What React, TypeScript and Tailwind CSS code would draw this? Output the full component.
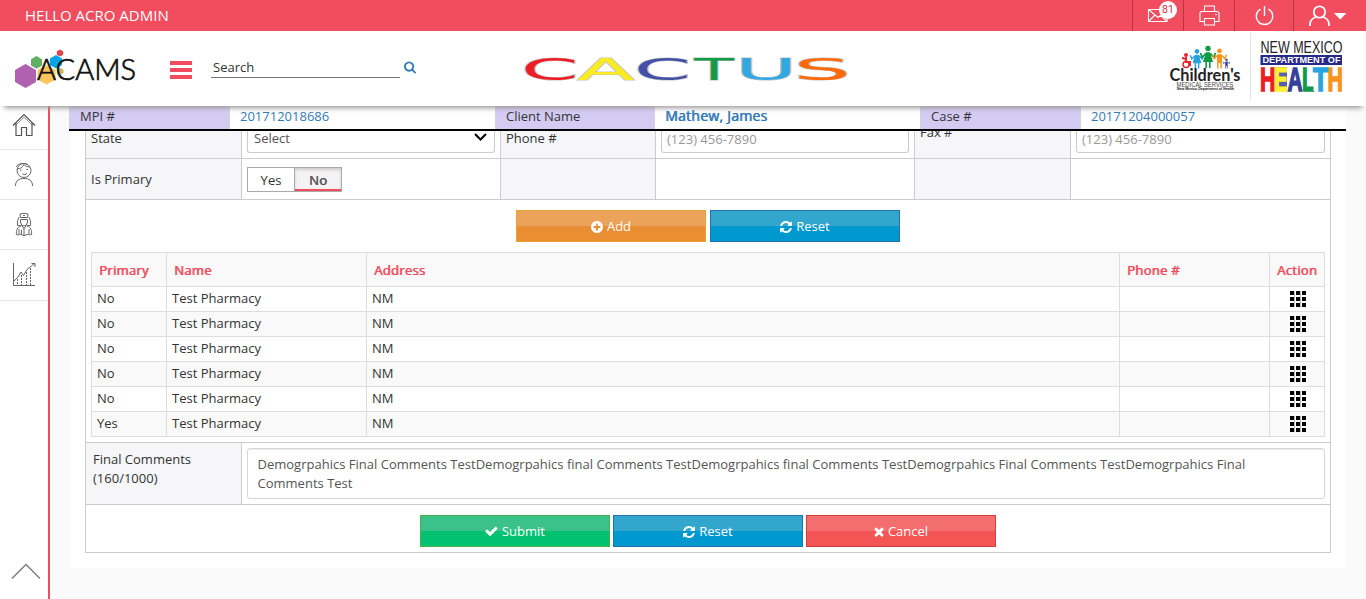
import type { ReactNode } from "react";

const FA = {
  plus: {
    box: "128 128 1536 1536",
    d: "M1344 960v-128q0-26-19-45t-45-19h-256v-256q0-26-19-45t-45-19h-128q-26 0-45 19t-19 45v256h-256q-26 0-45 19t-19 45v128q0 26 19 45t45 19h256v256q0 26 19 45t45 19h128q26 0 45-19t19-45v-256h256q26 0 45-19t19-45zm320-64q0 209-103 385.5t-279.5 279.5-385.5 103-385.5-103-279.5-279.5-103-385.5 103-385.5 279.5-279.5 385.5-103 385.5 103 279.5 279.5 103 385.5z",
  },
  refresh: {
    box: "0 0 1536 1536",
    d: "M1511 928q0 5-1 7-64 268-268 434.5t-478 166.5q-146 0-282.5-55t-243.5-157l-129 129q-19 19-45 19t-45-19-19-45v-448q0-26 19-45t45-19h448q26 0 45 19t19 45-19 45l-137 137q71 66 161 102t187 36q134 0 250-65t186-179q11-17 53-117 8-23 30-23h192q13 0 22.5 9.5t9.5 22.5zm25-800v448q0 26-19 45t-45 19h-448q-26 0-45-19t-19-45 19-45l138-138q-148-137-349-137-134 0-250 65t-186 179q-11 17-53 117-8 23-30 23h-199q-13 0-22.5-9.5t-9.5-22.5v-7q65-268 270-434.5t480-166.5q146 0 284 55.5t245 156.5l130-129q19-19 45-19t45 19 19 45z",
  },
  check: {
    box: "100 240 1600 1536",
    d: "M1671 566q0 40-28 68l-724 724-136 136q-28 28-68 28t-68-28l-136-136-362-362q-28-28-28-68t28-68l136-136q28-28 68-28t68 28l294 295 656-657q28-28 68-28t68 28l136 136q28 28 28 68z",
  },
  times: {
    box: "240 290 1300 1300",
    d: "M1490 1322q0 40-28 68l-136 136q-28 28-68 28t-68-28l-294-294-294 294q-28 28-68 28t-68-28l-136-136q-28-28-28-68t28-68l294-294-294-294q-28-28-28-68t28-68l136-136q28-28 68-28t68 28l294 294 294-294q28-28 68-28t68 28l136 136q28 28 28 68t-28 68l-294 294 294 294q28 28 28 68z",
  },
  search: {
    box: "64 128 1664 1664",
    d: "M1216 832q0-185-131.5-316.5t-316.5-131.5-316.5 131.5-131.5 316.5 131.5 316.5 316.5 131.5 316.5-131.5 131.5-316.5zm512 832q0 52-38 90t-90 38q-54 0-90-38l-343-342q-179 124-399 124-143 0-273.5-55.5t-225-150-150-225-55.5-273.5 55.5-273.5 150-225 225-150 273.5-55.5 273.5 55.5 225 150 150 225 55.5 273.5q0 220-124 399l343 343q37 37 37 90z",
  },
};

function Glyph({ name, className }: { name: keyof typeof FA; className: string }) {
  return (
    <svg viewBox={FA[name].box} className={`shrink-0 fill-current ${className}`}>
      <path d={FA[name].d} />
    </svg>
  );
}

function ActionButton({ tone, icon, iconClass, children }: { tone: string; icon: keyof typeof FA; iconClass: string; children: ReactNode }) {
  return (
    <button className={`flex h-8 w-[190px] items-center justify-center gap-1 border pt-px text-white ${tone}`}>
      <Glyph name={icon} className={iconClass} />
      <span>{children}</span>
    </button>
  );
}

const ORANGE = "border-[#eea236] bg-[linear-gradient(#eba35b_50%,#ea8e33_50%)]";
const BLUE = "border-[#2472ae] bg-[linear-gradient(#33a6cd_50%,#0099cf_50%)]";
const GREEN = "border-[#4cae4c] bg-[linear-gradient(#3bc18a_50%,#02c170_50%)]";
const RED = "border-[#d43f3a] bg-[linear-gradient(#f36f6f_50%,#f35454_50%)]";

function TopBar() {
  return (
    <div className="flex h-[31px] bg-[#f24c5f] text-white">
      <div className="flex-1 pl-[25px] text-[15px] leading-[31px]">HELLO ACRO ADMIN</div>
      <div className="relative w-[51px] border-l border-[#b93342]">
        <svg width="50" height="31" fill="none" stroke="#fff" strokeWidth="1.1">
          <path d="M15.500 9.500h18.500v12h-18.500zM15.500 9.500l9.500 8 9.500-8M15.500 21.500l6.500-6.500M34 21.500l-6.500-6.500" />
        </svg>
        <span className="absolute top-[1px] left-[26px] h-[18px] w-[18px] rounded-full bg-white text-center font-[Roboto,sans-serif] text-[10.5px] leading-[18px] text-[#e02f3f]">81</span>
      </div>
      <div className="w-[51px] border-l border-[#b93342]">
        <svg width="50" height="31" fill="none" stroke="#fff" strokeWidth="1.1">
          <path d="M20.500 11.500v-5.500h10v5.500M20.500 21.500h-4.500v-8q0-2 2-2h15q2 0 2 2v8h-4.500M20.500 18.500h10v6.500h-10zM31 14.500h2" />
        </svg>
      </div>
      <div className="w-[59px] border-l border-[#b93342]">
        <svg width="58" height="31" fill="none" stroke="#fff" strokeWidth="1.4">
          <path d="M29.500 6v10M25.500 9.200a8.200 8.200 0 1 0 8 0" />
        </svg>
      </div>
      <div className="w-[73px] border-l border-[#b93342]">
        <svg width="72" height="31" fill="none" stroke="#fff" strokeWidth="1.800">
          <circle cx="25.500" cy="12" r="5.700" />
          <path d="M16 26v-1.500c0-4.500 3-6.500 5.800-7.500M35 26v-1.500c0-4.500-3-6.500-5.800-7.500" />
          <path d="M40 13h12.500l-6.250 6.500z" fill="#fff" stroke="none" />
        </svg>
      </div>
    </div>
  );
}

function AcamsLogo() {
  return (
    <svg width="124" height="44" viewBox="13 47 124 44" className="ml-[13px] overflow-visible">
      <path d="M25.500 64l10.500 6v12l-10.500 6-10.500-6v-12z" fill="#b061b0" />
      <path d="M36.500 56l5.500 3.200v6.300l-5.500 3.200-5.500-3.200v-6.300z" fill="#5fae63" />
      <path d="M46.500 65l9 5v9.500l-9 5-9-5v-9.500z" fill="#fdc65c" />
      <path d="M56 55l6 3.500v6.500l-6 3.500-6-3.500v-6.500z" fill="#00a5e8" />
      <path d="M60 49.500l3.200 1.700v3.600l-3.200 1.800-3.200-1.800v-3.600z" fill="#d8494b" />
      <path d="M60.500 68l3 1.700v3.200l-3 1.700-3-1.700v-3.200z" fill="#cdb266" />
      <text x="37" y="80" textLength="99" lengthAdjust="spacingAndGlyphs" fontSize="28.500" fontWeight="300" fill="#111" stroke="#111" strokeWidth="0.700" fontFamily="Lato, sans-serif">ACAMS</text>
    </svg>
  );
}

const CACTUS = [
  { ch: "C", x: 525.5, w: 48.5, c: "#ee1c24" },
  { ch: "A", x: 578, w: 56, c: "#fbec21" },
  { ch: "C", x: 638.5, w: 48, c: "#4450a6" },
  { ch: "T", x: 694, w: 40, c: "#119b49" },
  { ch: "U", x: 742.5, w: 47.5, c: "#33a7e0" },
  { ch: "S", x: 799.5, w: 45.500, c: "#ff6a09" },
];
const CACTUS_INK: Record<string, [number, number]> = {
  C: [0.056, 0.588],
  A: [0.008, 0.668],
  T: [-0.003, 0.617],
  U: [0.087, 0.558],
  S: [0.066, 0.503],
};

function CactusLogo() {
  return (
    <svg width="326" height="32" viewBox="522 53 326 32" className="mt-[22px] self-start overflow-visible">
      {CACTUS.map((l, i) => {
        const [lsb, gw] = CACTUS_INK[l.ch];
        const sx = l.w / (gw * 30);
        const transform = `translate(${l.x - lsb * 30 * sx} 80.3) scale(${sx} 1)`;
        return (
          <text
            key={i}
            transform={transform}
            fontSize="30"
            fontFamily="'DejaVu Sans', sans-serif"
            fill={l.c}
            stroke="#c4c4c4"
            strokeWidth="1"
            paintOrder="stroke"
          >
            {l.ch}
          </text>
        );
      })}
    </svg>
  );
}

function Person({ x, y, s, c, dress }: { x: number; y: number; s: number; c: string; dress?: boolean }) {
  return (
    <g transform={`translate(${x} ${y}) scale(${s})`} fill={c} stroke={c}>
      <circle cx="0" cy="-18" r="2" />
      {dress ? <path d="M-1.500-14h3l2.500 8h-8z" /> : <path d="M-2-14h4v8h-4z" />}
      <path d="M-1.700-6v6M1.700-6v6M-2-13.500l-3.500 3.500-1.500-4M2-13.500l3.500 3.500 1.500-4" fill="none" strokeWidth="1.500" />
    </g>
  );
}

function ChildrensLogo() {
  return (
    <svg width="76" height="54" viewBox="1167 42 76 54" className="overflow-visible">
      <circle cx="1186" cy="55" r="2" fill="#e8242e" />
      <path d="M1186 57v5h4v4M1186 59l-4-1" stroke="#e8242e" strokeWidth="2" fill="none" />
      <circle cx="1186" cy="64.500" r="3" stroke="#e8242e" strokeWidth="1.500" fill="none" />
      <Person x={1197} y={68.5} s={0.95} c="#25a0dc" dress />
      <Person x={1208} y={68} s={1.08} c="#0f9a48" dress />
      <Person x={1219.5} y={68.5} s={0.98} c="#f7941e" />
      <Person x={1226.5} y={68.5} s={0.480} c="#2f3b98" />
      <text x="1169.500" y="81" textLength="71" lengthAdjust="spacingAndGlyphs" fontSize="16.500" fontWeight="700" fontFamily="Lato, sans-serif" fill="#222">Children's</text>
      <text x="1176.500" y="87" textLength="57" lengthAdjust="spacingAndGlyphs" fontSize="7" fontFamily="'Liberation Sans', sans-serif" fill="#444">MEDICAL SERVICES</text>
      <text x="1177" y="90.300" textLength="57" lengthAdjust="spacingAndGlyphs" fontSize="4" fontWeight="700" fontFamily="'Liberation Sans', sans-serif" fill="#111">New Mexico Department of Health</text>
    </svg>
  );
}

const HEALTH = [
  { ch: "H", x: 1261.5, bg: "#ffffff", c: "#ee1c25", w: 12.5, lsb: 0.067, ink: 0.586 },
  { ch: "E", x: 1275.5, bg: "#5560a8", c: "#fdf02c", w: 11.500, lsb: 0.067, ink: 0.56 },
  { ch: "A", x: 1287.5, bg: "#ffffff", c: "#35409a", w: 15, lsb: 0, ink: 0.72 },
  { ch: "L", x: 1303.5, bg: "#ffffff", c: "#12994a", w: 10.500, lsb: 0.067, ink: 0.51 },
  { ch: "T", x: 1313.5, bg: "#ffffff", c: "#27a3e0", w: 14, lsb: 0.021, ink: 0.568 },
  { ch: "H", x: 1329, bg: "#ffffff", c: "#f7941e", w: 12.500, lsb: 0.067, ink: 0.586 },
];

function HealthLogo() {
  return (
    <svg width="84" height="54" viewBox="1260 40 84 54" className="overflow-visible">
      <text x="1260.500" y="53" textLength="82" lengthAdjust="spacingAndGlyphs" fontSize="16" fontFamily="'Liberation Sans', sans-serif" fill="#222">NEW MEXICO</text>
      <rect x="1260.500" y="55" width="81.500" height="10" fill="#262a86" />
      <text x="1262.500" y="63.300" textLength="78" lengthAdjust="spacingAndGlyphs" fontSize="9.500" fontWeight="700" fontFamily="'Liberation Sans', sans-serif" fill="#fff">DEPARTMENT OF</text>
      {HEALTH.map((l, i) => {
        const sx = l.w / (l.ink * 33);
        return (
          <g key={i}>
            <rect x={l.x} y="67" width={l.w} height="24" fill={l.bg} />
            <text
              transform={`translate(${l.x - l.lsb * 33 * sx} 90.5) scale(${sx} 1)`}
              fontSize="33"
              fontWeight="700"
              fontFamily="'Liberation Sans', sans-serif"
              fill={l.c}
              stroke={l.c}
              strokeWidth="1.500"
            >
              {l.ch}
            </text>
          </g>
        );
      })}
    </svg>
  );
}

function Header() {
  return (
    <header className="relative z-20 h-[106px] bg-white shadow-[0_6px_5px_-4px_#999]">
      <TopBar />
      <div className="flex h-[75px]">
        <div className="flex w-[522px] items-center">
          <AcamsLogo />
          <div className="ml-[33px] flex w-[22px] flex-col gap-[3px] pt-[2px]">
            <span className="h-1 bg-[#f24c5f]" />
            <span className="h-1 bg-[#f24c5f]" />
            <span className="h-1 bg-[#f24c5f]" />
          </div>
          <div className="mb-[3px] ml-[19px] h-[22px] w-[189px] border-b border-[#777] pl-[2px] text-[13px] leading-[22px] text-[#333]">Search</div>
          <Glyph name="search" className="mb-[2px] ml-1 h-[13px] w-3 text-[#337ab7]" />
        </div>
        <CactusLogo />
        <div className="flex flex-1 justify-end pt-[2px]">
          <div className="pt-[9px]"><ChildrensLogo /></div>
          <div className="ml-[7px] h-[68px] border-l border-[#e4e4e4]" />
          <div className="mr-[22px] ml-[9px] pt-[7px]"><HealthLogo /></div>
        </div>
      </div>
    </header>
  );
}

function Sidebar() {
  return (
    <aside className="flex w-[50px] flex-col border-r-2 border-[#f24c5f] bg-white">
      <div className="h-11 border-b border-[#e7e7e7]">
        <svg width="48" height="43" fill="none" stroke="#555" strokeWidth="1.200">
          <path d="M13 19.500l11-11 11 11M16 17v12.500h5.500v-8h5v8h5.500v-12.500" />
          <path d="M15.500 19.500l8.500-8.500 8.500 8.500" strokeWidth="0.600" />
        </svg>
      </div>
      <div className="h-[50px] border-b border-[#e7e7e7]">
        <svg width="48" height="49" fill="none" stroke="#666" strokeWidth="1">
          <circle cx="24" cy="20.500" r="7" />
          <path d="M15.500 36c0-6 4-7.500 8.500-7.500s8.500 1.500 8.500 7.500M17 19c3 0 6-2 7-4.500 1 1.500 3 2.500 6 2.500M16.500 17c1-3.500 7-4.500 11-2.500M22.500 24q2.500 1.500 4.500-.5M20 20h1.500M26.500 19.500h1.500" />
        </svg>
      </div>
      <div className="h-[50px] border-b border-[#e7e7e7]">
        <svg width="48" height="49" fill="none" stroke="#666" strokeWidth="1">
          <path d="M20.500 17.500l-.5-3.500q4-1.500 8 0l-.5 3.500zM19 17q-2 3-1.500 8.500h4M29 17q2 3 1.500 8.500h-4M20.500 19.500v2.500q.5 4 3.500 4t3.500-4v-2.500zM21 26c-4 1-5 5-4.500 8.500l2.500.5M27 26c4 1 5 5 4.500 8.500l-2.500.5M19 29v5q5 3 10 0v-5M24 28v8M22 26l2 2.500 2-2.500M21.500 30v4M25 15.500h-2" />
        </svg>
      </div>
      <div className="h-[51px] border-b border-[#e7e7e7]">
        <svg width="48" height="50" fill="none" stroke="#666" strokeWidth="1">
          <path d="M13.500 13v22.500H35" />
          <path d="M14 31l4-4 3-5 2.500 3.500 3.500-6 7-5.500M31.500 13.500h3.500v3.500" />
          <path d="M17.500 29v6M21.500 25v10M26.500 22v13M30.500 18v17" strokeDasharray="2 1" />
        </svg>
      </div>
      <svg width="48" height="30" className="mt-auto mb-[14px]" fill="none" stroke="#777" strokeWidth="1.300">
        <path d="M12 23.500l14-14 14 14" />
      </svg>
    </aside>
  );
}

const BOLD = "[text-shadow:0.7px_0_0_currentColor]";

function ClientBar() {
  return (
    <div className="ml-[-1px] grid h-[25px] grid-cols-[160px_266px_159px_266px_160px_266px] border-b-2 border-black bg-white leading-[20px] [&>div]:border-l [&>div]:border-[#d3d3d3] [&>div]:pl-[10px]">
      <div className="bg-[#d4cbf3]">MPI #</div>
      <div className="text-[#337ab7]">201712018686</div>
      <div className="bg-[#d4cbf3]">Client Name</div>
      <div className={`text-[14px] tracking-[0.25px] text-[#337ab7] ${BOLD}`}>Mathew, James</div>
      <div className="bg-[#d4cbf3]">Case #</div>
      <div className="text-[#337ab7]">20171204000057</div>
    </div>
  );
}

const ROWS = ["No", "No", "No", "No", "No", "Yes"];
const FORM_GRID = "grid grid-cols-[156px_259px_155px_259px_156px_260px] border-b border-[#ccc] [&>div]:border-l [&>div]:border-[#ccc] [&>div]:pl-[5px] [&>div]:pr-[5px]";
const TABLE_GRID = "grid grid-cols-[75px_200px_753px_150px_55px] border-b border-[#ddd] [&>div]:border-l [&>div]:border-[#ddd]";

function GridIcon() {
  return (
    <svg width="16" height="16" className="mt-1 ml-5">
      <path d="M4.500 0v16M10.500 0v16" stroke="#bbb" />
      <path d="M0 0h4v4H0zM6 0h4v4H6zM12 0h4v4h-4zM0 6h4v4H0zM6 6h4v4H6zM12 6h4v4h-4zM0 12h4v4H0zM6 12h4v4H6zM12 12h4v4h-4z" />
    </svg>
  );
}

function Pharmacies() {
  return (
    <div className="mx-[5px] border-t border-r border-[#ddd]">
      <div className={`${TABLE_GRID} h-[34px] bg-[#f9f9f9] leading-[35px] tracking-[0.3px] text-[#f24c5f] ${BOLD} [&>div]:pl-[7px]`}>
        <div>Primary</div>
        <div>Name</div>
        <div>Address</div>
        <div>Phone #</div>
        <div>Action</div>
      </div>
      {ROWS.map((primary, i) => (
        <div key={i} className={`${TABLE_GRID} h-[25px] leading-[23px] ${i % 2 ? "bg-[#f9f9f9]" : "bg-white"}`}>
          <div className="pl-[5px]">{primary}</div>
          <div className="pl-[5px]">Test Pharmacy</div>
          <div className="pl-[5px]">NM</div>
          <div />
          <div><GridIcon /></div>
        </div>
      ))}
    </div>
  );
}

function Form() {
  return (
    <div className="mx-[15px] border-r border-[#ccc]">
      <div className={`${FORM_GRID} h-7`}>
        <div className="bg-[#f6f6f9] leading-[15px]">State</div>
        <div>
          <div className="flex h-[22px] justify-between rounded-b-[3px] border border-t-0 border-[#ccc] pr-[7px] pl-[6px] leading-[15px] text-[#555]">
            Select
            <svg width="13" height="12" fill="none" stroke="#000" strokeWidth="2"><path d="M1 3l5.500 5.500 5.500-5.500" /></svg>
          </div>
        </div>
        <div className="bg-[#f6f6f9] leading-[15px]">Phone #</div>
        <div>
          <div className="h-[22px] rounded-b-[3px] border border-t-0 border-[#ccc] pl-[5px] leading-[16px] text-[#999]">(123) 456-7890</div>
        </div>
        <div className="bg-[#f6f6f9]"><div className="-mt-[8px] leading-[19px]">Fax #</div></div>
        <div>
          <div className="h-[22px] rounded-b-[3px] border border-t-0 border-[#ccc] pl-[5px] leading-[16px] text-[#999]">(123) 456-7890</div>
        </div>
      </div>
      <div className={`${FORM_GRID} h-[41px]`}>
        <div className="bg-[#f6f6f9] leading-[40px]">Is Primary</div>
        <div className="pt-2">
          <div className="flex h-[25px] w-[95px] border border-[#aaa] leading-[25px]">
            <div className="w-[47px] border-r border-[#aaa] text-center text-[#333]">Yes</div>
            <div className="flex-1 border-b-2 border-[#f24c5f] bg-[#f5f2f4] text-center text-[#555] shadow-[inset_0_2px_3px_#ccc]">
              <span className={`tracking-[0.3px] ${BOLD}`}>No</span>
            </div>
          </div>
        </div>
        <div className="bg-[#f6f6f9]" />
        <div />
        <div className="bg-[#f6f6f9]" />
        <div />
      </div>
      <div className="h-[243px] border-b border-l border-[#ccc]">
        <div className="flex h-[52px] justify-center gap-1 pt-[10px]">
          <ActionButton tone={ORANGE} icon="plus" iconClass="h-3 w-3">Add</ActionButton>
          <ActionButton tone={BLUE} icon="refresh" iconClass="h-3 w-3">Reset</ActionButton>
        </div>
        <Pharmacies />
      </div>
      <div className="grid h-[62px] grid-cols-[156px_1fr] border-b border-[#ccc]">
        <div className="border-l border-[#ccc] bg-[#f6f6f9] pt-[7px] pl-[7px] leading-[19px]">Final Comments<br />(160/1000)</div>
        <div className="border-l border-[#ccc] p-[5px]">
          <div className="h-[51px] rounded-[3px] border border-[#d5d5d5] pt-[6px] pl-[9.5px] leading-[19px] tracking-[0.008px] whitespace-nowrap text-[#555] shadow-[inset_0_1px_1px_#00000013]">
            Demogrpahics Final Comments TestDemogrpahics final Comments TestDemogrpahics final Comments TestDemogrpahics Final Comments TestDemogrpahics Final<br />Comments Test
          </div>
        </div>
      </div>
      <div className="flex h-12 justify-center gap-[3px] border-b border-l border-[#ccc] pt-[10px]">
        <ActionButton tone={GREEN} icon="check" iconClass="h-3 w-[13px]">Submit</ActionButton>
        <ActionButton tone={BLUE} icon="refresh" iconClass="h-3 w-3">Reset</ActionButton>
        <ActionButton tone={RED} icon="times" iconClass="h-[10px] w-[10px]">Cancel</ActionButton>
      </div>
    </div>
  );
}

export default function App() {
  return (
    <div className="flex h-[599px] w-[1366px] flex-col overflow-hidden bg-[#fafafa] font-['Open_Sans',sans-serif] text-[13px] text-[#333]">
      <Header />
      <div className="flex flex-1">
        <Sidebar />
        <main className="ml-5 h-[462px] w-[1276px] bg-white">
          <ClientBar />
          <div className="overflow-hidden">
            <Form />
          </div>
        </main>
      </div>
    </div>
  );
}
